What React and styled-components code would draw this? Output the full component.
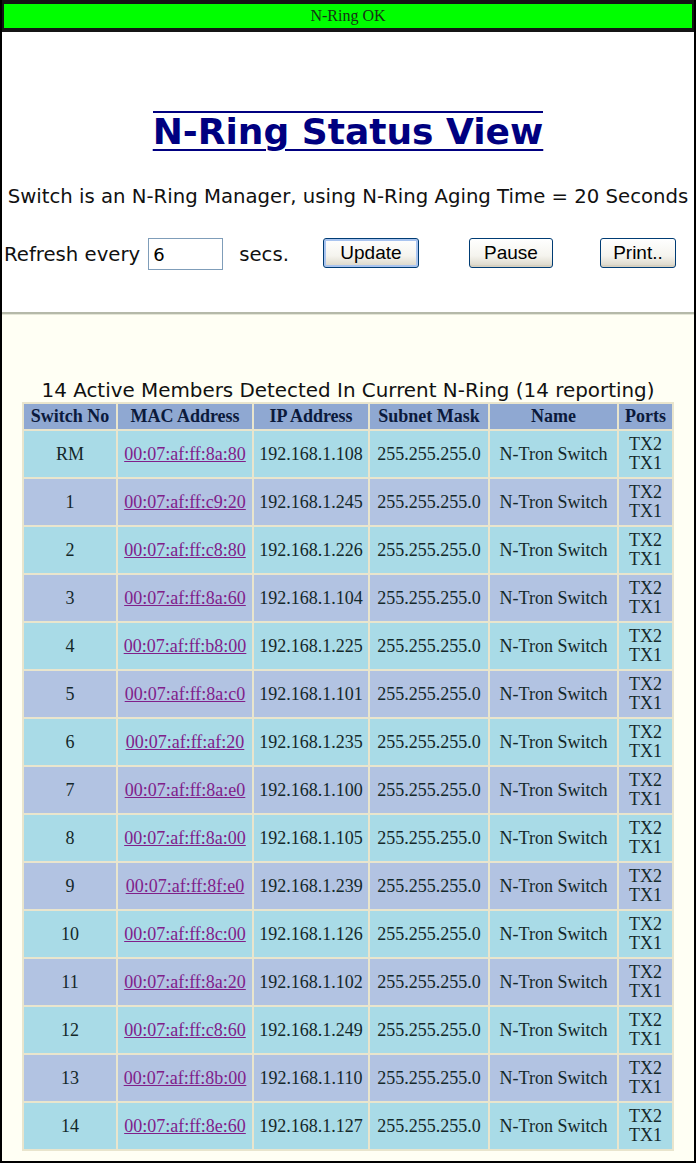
import React from 'react';
import styled, { createGlobalStyle } from 'styled-components';

const GlobalStyle = createGlobalStyle`
  html, body {
    margin: 0;
    padding: 0;
    background: #ffffff;
  }
`;

const Page = styled.div`
  box-sizing: border-box;
  width: 696px;
  height: 1163px;
  border: 2px solid #000;
  border-top: none;
  display: flex;
  flex-direction: column;
  overflow: hidden;
`;

const StatusBar = styled.div`
  height: 24px;
  background: #00ff00;
  border: 2px solid #151515;
  border-top-width: 4px;
  border-bottom-width: 4px;
  display: flex;
  align-items: center;
  justify-content: center;
  font-family: "Liberation Serif", "Times New Roman", serif;
  font-size: 16px;
  color: #163216;
`;

const TopSection = styled.div`
  height: 280px;
  background: #fff;
  display: flex;
  flex-direction: column;
  align-items: center;
`;

const Title = styled.h1`
  margin: 79px 0 0;
  font-family: "DejaVu Sans", Verdana, sans-serif;
  font-weight: bold;
  font-size: 36px;
  line-height: 38px;
  color: #000080;
  border-top: 2px solid #000080;
  text-decoration: underline;
  text-decoration-thickness: 2px;
  text-underline-offset: 5px;
`;

const Info = styled.p`
  margin: 34px 0 0;
  font-family: "DejaVu Sans", Verdana, sans-serif;
  font-size: 19.7px;
  color: #111;
  white-space: nowrap;
`;

const Controls = styled.div`
  align-self: stretch;
  margin-top: 30px;
  padding-left: 2px;
  display: flex;
  align-items: center;
  font-family: "DejaVu Sans", Verdana, sans-serif;
  font-size: 19.7px;
  color: #111;
`;

const Label = styled.span`
  margin-right: ${p => p.$gap || 0}px;
  white-space: nowrap;
`;

const RateInput = styled.input`
  box-sizing: border-box;
  width: 75px;
  height: 32px;
  margin: 0 16px 0 0;
  padding: 0 4px;
  border: 1px solid #7f9db9;
  font-family: "DejaVu Sans", Verdana, sans-serif;
  font-size: 18px;
  color: #000;
`;

const Button = styled.button`
  box-sizing: border-box;
  width: ${p => p.$w}px;
  height: 30px;
  margin-left: ${p => p.$ml}px;
  margin-top: -2px;
  padding: 0;
  border: 1px solid #003c74;
  border-radius: 3px;
  background: linear-gradient(#ffffff 0%, #f5f4ee 60%, #d9d5c7 100%);
  box-shadow: ${p => (p.$default ? 'inset 0 0 0 2px #a9c4ef' : 'inset 0 -2px 0 #d6d0c0')};
  font-family: "Liberation Sans", Arial, sans-serif;
  font-size: 19px;
  color: #000;
`;

const Divider = styled.div`
  height: 2px;
  background: #b5b9a9;
  border-bottom: 1px solid #e4e6d6;
`;

const LowerSection = styled.div`
  flex: 1;
  background: #fffff4;
  display: flex;
  flex-direction: column;
  align-items: center;
`;

const Caption = styled.div`
  margin-top: 65px;
  font-family: "DejaVu Sans", Verdana, sans-serif;
  font-size: 19.9px;
  line-height: 22px;
  color: #111;
  white-space: nowrap;
`;

const Table = styled.table`
  width: 652px;
  margin: 0;
  border-collapse: collapse;
  border: 2px solid;
  border-color: #efedda #a3a394 #a3a394 #efedda;
  font-family: "Liberation Serif", "Times New Roman", serif;
  font-size: 18px;
  table-layout: fixed;
`;

const Th = styled.th`
  width: ${p => p.$w}px;
  height: 25px;
  padding: 0;
  background: #8fa8d2;
  border: 2px solid #e9e5cd;
  color: #0b1a3c;
  font-weight: bold;
  line-height: 23px;
  white-space: nowrap;
`;

const Td = styled.td`
  height: 46px;
  padding: 0;
  text-align: center;
  background: ${p => (p.$alt ? '#b2c3e2' : '#a9dbe7')};
  border: 2px solid #e9e5cd;
  color: #14282a;
  line-height: 20px;
  white-space: nowrap;
`;

const MacLink = styled.a`
  color: #80208a;
  text-decoration: underline;
`;

const Ports = styled.div`
  display: flex;
  flex-direction: column;
  align-items: center;
  line-height: 19px;
`;

const columns = [
  { label: 'Switch No', w: 92 },
  { label: 'MAC Address', w: 134 },
  { label: 'IP Address', w: 114 },
  { label: 'Subnet Mask', w: 118 },
  { label: 'Name', w: 127 },
  { label: 'Ports', w: 53 },
];

const members = [
  ['RM', '00:07:af:ff:8a:80', '192.168.1.108'],
  ['1', '00:07:af:ff:c9:20', '192.168.1.245'],
  ['2', '00:07:af:ff:c8:80', '192.168.1.226'],
  ['3', '00:07:af:ff:8a:60', '192.168.1.104'],
  ['4', '00:07:af:ff:b8:00', '192.168.1.225'],
  ['5', '00:07:af:ff:8a:c0', '192.168.1.101'],
  ['6', '00:07:af:ff:af:20', '192.168.1.235'],
  ['7', '00:07:af:ff:8a:e0', '192.168.1.100'],
  ['8', '00:07:af:ff:8a:00', '192.168.1.105'],
  ['9', '00:07:af:ff:8f:e0', '192.168.1.239'],
  ['10', '00:07:af:ff:8c:00', '192.168.1.126'],
  ['11', '00:07:af:ff:8a:20', '192.168.1.102'],
  ['12', '00:07:af:ff:c8:60', '192.168.1.249'],
  ['13', '00:07:af:ff:8b:00', '192.168.1.110'],
  ['14', '00:07:af:ff:8e:60', '192.168.1.127'],
];

const App = () => (
  <>
    <GlobalStyle />
    <Page>
      <StatusBar>N-Ring OK</StatusBar>
      <TopSection>
        <Title>N-Ring Status View</Title>
        <Info>Switch is an N-Ring Manager, using N-Ring Aging Time = 20 Seconds</Info>
        <Controls>
          <Label $gap={8}>Refresh every</Label>
          <RateInput defaultValue="6" />
          <Label>secs.</Label>
          <Button $w={96} $ml={34} $default>Update</Button>
          <Button $w={84} $ml={50}>Pause</Button>
          <Button $w={76} $ml={47}>Print..</Button>
        </Controls>
      </TopSection>
      <Divider />
      <LowerSection>
        <Caption>14 Active Members Detected In Current N-Ring (14 reporting)</Caption>
        <Table>
          <thead>
            <tr>
              {columns.map(c => (
                <Th key={c.label} $w={c.w}>{c.label}</Th>
              ))}
            </tr>
          </thead>
          <tbody>
            {members.map(([no, mac, ip], i) => (
              <tr key={no}>
                <Td $alt={i % 2 === 1}>{no}</Td>
                <Td $alt={i % 2 === 1}><MacLink href="#">{mac}</MacLink></Td>
                <Td $alt={i % 2 === 1}>{ip}</Td>
                <Td $alt={i % 2 === 1}>255.255.255.0</Td>
                <Td $alt={i % 2 === 1}>N-Tron Switch</Td>
                <Td $alt={i % 2 === 1}>
                  <Ports><span>TX2</span><span>TX1</span></Ports>
                </Td>
              </tr>
            ))}
          </tbody>
        </Table>
      </LowerSection>
    </Page>
  </>
);

export default App;
